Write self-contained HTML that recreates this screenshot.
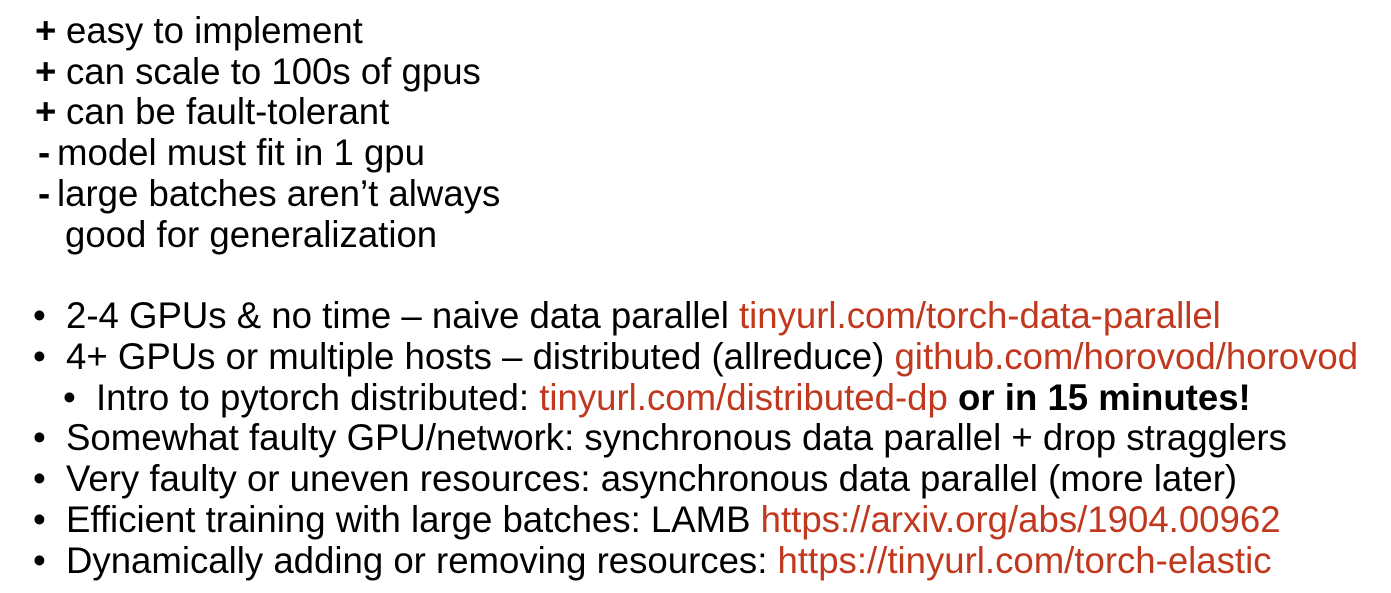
<!DOCTYPE html>
<html><head><meta charset="utf-8"><style>
body{margin:0;width:1391px;height:593px;background:#fff;overflow:hidden;font-family:"Liberation Sans",sans-serif;font-size:36.6px;color:#000}
.l{position:absolute;white-space:nowrap;line-height:41px;height:41px}
.r{color:#c0391f}
b{font-weight:bold}
</style></head><body>
<div class="l" style="left:35px;top:10px"><b>+</b></div><div class="l" style="left:66px;top:10px">easy to implement</div>
<div class="l" style="left:35px;top:51px"><b>+</b></div><div class="l" style="left:66px;top:51px">can scale to 100s of gpus</div>
<div class="l" style="left:35px;top:91px"><b>+</b></div><div class="l" style="left:66px;top:91px">can be fault-tolerant</div>
<div class="l" style="left:38px;top:132px"><b>-</b></div><div class="l" style="left:57px;top:132px">model must fit in 1 gpu</div>
<div class="l" style="left:38px;top:173px"><b>-</b></div><div class="l" style="left:57px;top:173px">large batches aren’t always</div>
<div class="l" style="left:65px;top:214px">good for generalization</div>
<div class="l" style="left:33px;top:295px">•</div><div class="l" style="left:66px;top:295px">2-4 GPUs &amp; no time – naive data parallel <span class="r">tinyurl.com/torch-data-parallel</span></div>
<div class="l" style="left:33px;top:336px">•</div><div class="l" style="left:66px;top:336px">4+ GPUs or multiple hosts – distributed (allreduce) <span class="r">github.com/horovod/horovod</span></div>
<div class="l" style="left:63px;top:377px">•</div><div class="l" style="left:96px;top:377px">Intro to pytorch distributed: <span class="r">tinyurl.com/distributed-dp</span> <b>or in 15 minutes!</b></div>
<div class="l" style="left:33px;top:417px">•</div><div class="l" style="left:66px;top:417px">Somewhat faulty GPU/network: synchronous data parallel + drop stragglers</div>
<div class="l" style="left:33px;top:458px">•</div><div class="l" style="left:66px;top:458px">Very faulty or uneven resources: asynchronous data parallel (more later)</div>
<div class="l" style="left:33px;top:499px">•</div><div class="l" style="left:66px;top:499px">Efficient training with large batches: LAMB <span class="r">https://arxiv.org/abs/1904.00962</span></div>
<div class="l" style="left:33px;top:540px">•</div><div class="l" style="left:66px;top:540px">Dynamically adding or removing resources: <span class="r">https://tinyurl.com/torch-elastic</span></div>
</body></html>
